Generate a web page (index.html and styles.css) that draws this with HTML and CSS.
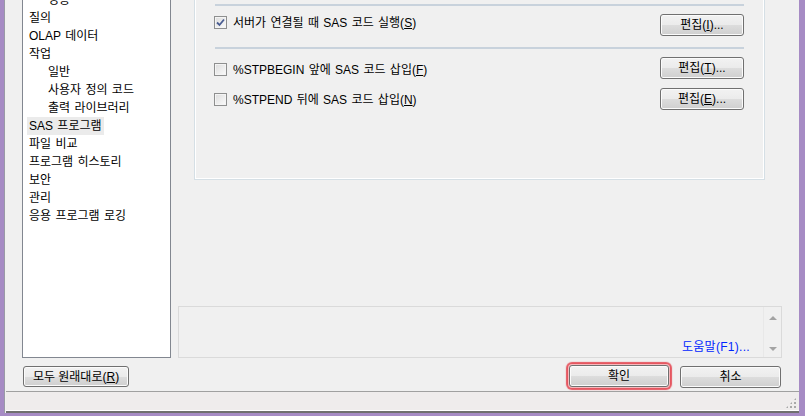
FILE: index.html
```html
<!DOCTYPE html>
<html lang="ko">
<head>
<meta charset="utf-8">
<title>옵션</title>
<link rel="stylesheet" href="styles.css">
</head>
<body>
<div class="window">
  <div class="client">
    <div class="main">
      <div class="list">
        <div class="items">
          <div class="item sub">성능</div>
          <div class="item">질의</div>
          <div class="item">OLAP 데이터</div>
          <div class="item">작업</div>
          <div class="item sub">일반</div>
          <div class="item sub">사용자 정의 코드</div>
          <div class="item sub">출력 라이브러리</div>
          <div class="item"><span class="sel">SAS 프로그램</span></div>
          <div class="item">파일 비교</div>
          <div class="item">프로그램 히스토리</div>
          <div class="item">보안</div>
          <div class="item">관리</div>
          <div class="item">응용 프로그램 로깅</div>
        </div>
      </div>
      <div class="right">
        <div class="group">
          <div class="sep"></div>
          <div class="row r1">
            <label class="chk"><span class="box checked"><svg width="9" height="9" viewBox="0 0 9 9"><path d="M1 4.5 L3.5 7 L8 1.5" fill="none" stroke="#4a5d92" stroke-width="1.8"/></svg></span><span class="lbl">서버가 연결될 때 SAS 코드 실행(<u>S</u>)</span></label>
            <button class="btn edit">편집(<u>I</u>)...</button>
          </div>
          <div class="sep s2"></div>
          <div class="row r2">
            <label class="chk"><span class="box"></span><span class="lbl">%STPBEGIN 앞에 SAS 코드 삽입(<u>F</u>)</span></label>
            <button class="btn edit">편집(<u>T</u>)...</button>
          </div>
          <div class="row r3">
            <label class="chk"><span class="box"></span><span class="lbl">%STPEND 뒤에 SAS 코드 삽입(<u>N</u>)</span></label>
            <button class="btn edit">편집(<u>E</u>)...</button>
          </div>
        </div>
        <div class="help">
          <div class="help-text"><span class="link">도움말(F1)...</span></div>
          <div class="vscroll">
            <span class="arrow up"></span>
            <span class="arrow down"></span>
          </div>
        </div>
      </div>
    </div>
    <div class="actions">
      <button class="btn reset">모두 원래대로(<u>R</u>)</button>
      <div class="spacer"></div>
      <button class="btn ok">확인</button>
      <button class="btn cancel">취소</button>
    </div>
    <div class="status"><span class="grip"></span></div>
  </div>
</div>
</body>
</html>
```
FILE: styles.css
```css
html, body {
  margin: 0;
  padding: 0;
}
body {
  width: 805px;
  height: 416px;
  overflow: hidden;
  background: #a68bc4;
  font: 12px "Liberation Sans", "Noto Sans CJK KR", sans-serif;
  color: #000;
}
.window {
  box-sizing: border-box;
  height: 416px;
  padding: 0 6px 3px 4px;
}
.client {
  height: 413px;
  background: #f0f0f0;
  display: flex;
  flex-direction: column;
  box-shadow: inset 1px 0 0 #9a9aa6;
}
.main {
  flex: 1;
  margin-top: -20px;
  display: flex;
  gap: 7px;
  padding: 0 17px 0 18px;
  min-height: 0;
}
.list {
  width: 147px;
  background: #fff;
  border: 1px solid #828790;
  overflow: hidden;
}
.items {
  padding-top: 10px;
  display: flex;
  flex-direction: column;
}
.item {
  height: 18px;
  line-height: 18px;
  white-space: nowrap;
  word-spacing: 1px;
}
.item.sub {
  padding-left: 25px;
}
.item:not(.sub) {
  padding-left: 6px;
}
.sel {
  display: inline-block;
  background: #ebebeb;
  margin-left: -2px;
  padding: 0 2px;
  line-height: 18px;
}
.right {
  flex: 1;
  display: flex;
  flex-direction: column;
  justify-content: space-between;
}
.group {
  margin: 0 17px 0 16px;
  border: 1px solid #d5dfe5;
  box-shadow: inset 0 0 0 1px #fff;
  padding: 23px 20px 69px 19px;
}
.sep {
  height: 2px;
  background: #c8d2dc;
  margin-left: 1px;
}
.sep.s2 {
  margin-top: 11px;
}
.row {
  display: flex;
  justify-content: space-between;
  align-items: flex-start;
  height: 22px;
}
.row.r1 { margin-top: 8px; }
.row.r2 { margin-top: 8px; }
.row.r3 { margin-top: 9px; }
.r1 .chk { margin-top: 2px; }
.r2 .chk { margin-top: 6px; }
.r3 .chk { margin-top: 5px; }
.chk {
  display: flex;
  align-items: center;
  gap: 6px;
  height: 13px;
  line-height: 13px;
  white-space: nowrap;
}
.lbl {
  display: block;
  padding-top: 1px;
  word-spacing: 1px;
}
.box {
  box-sizing: border-box;
  width: 13px;
  height: 13px;
  border: 1px solid #8e8f8f;
  background: linear-gradient(135deg, #dcdcdc, #fbfbfb);
  box-shadow: inset 0 0 0 1px #f4f4f4;
  display: flex;
  align-items: center;
  justify-content: center;
}
.btn {
  box-sizing: border-box;
  font: inherit;
  color: #000;
  border: 1px solid #707070;
  border-radius: 3px;
  background: linear-gradient(#f2f2f2 0%, #ebebeb 50%, #dddddd 50%, #cfcfcf 100%);
  box-shadow: inset 0 0 0 1px #fbfbfb;
  padding: 0;
  height: 22px;
  line-height: 18px;
  text-align: center;
}
.btn.edit {
  width: 84px;
}
.help {
  height: 52px;
  box-sizing: border-box;
  border: 1px solid #dadada;
  display: flex;
}
.help-text {
  flex: 1;
  display: flex;
  justify-content: flex-end;
  align-items: flex-end;
  padding: 0 13px 2px 0;
}
.link {
  color: #0026ff;
  line-height: 16px;
  letter-spacing: 0.3px;
}
.vscroll {
  width: 17px;
  border-left: 1px solid #e8e8e8;
  display: flex;
  flex-direction: column;
  justify-content: space-between;
  align-items: center;
  padding: 9px 0 6px;
}
.arrow {
  width: 0;
  height: 0;
  border-left: 4px solid transparent;
  border-right: 4px solid transparent;
}
.arrow.up {
  border-bottom: 4px solid #a3a3a3;
}
.arrow.down {
  border-top: 4px solid #a3a3a3;
}
.actions {
  display: flex;
  align-items: flex-start;
  gap: 11px;
  margin: 8px 0 4px;
  padding: 0 18px 0 19px;
  height: 21px;
}
.spacer {
  flex: 1;
}
.btn.reset {
  width: 106px;
  height: 21px;
}
.btn.ok {
  width: 100px;
  margin-top: -1px;
  box-shadow: inset 0 0 0 1px #fbfbfb, 0 0 0 1px #f6b9bd, 0 0 1px 3px rgba(226, 48, 60, 0.8);
}
.btn.cancel {
  width: 101px;
}
.status {
  height: 22px;
  box-sizing: border-box;
  border-top: 1px solid #a0a0a0;
  border-bottom: 2px solid #6f6f6f;
  box-shadow: inset 0 -1px 0 #fff;
  background: #efecec;
  margin-left: 2px;
  position: relative;
}
.grip {
  position: absolute;
  right: 2px;
  bottom: 2px;
  width: 12px;
  height: 12px;
  background-image: radial-gradient(circle, #a8a8a8 1px, transparent 1.2px);
  background-size: 4px 4px;
  clip-path: polygon(100% 0, 100% 100%, 0 100%);
}
```
